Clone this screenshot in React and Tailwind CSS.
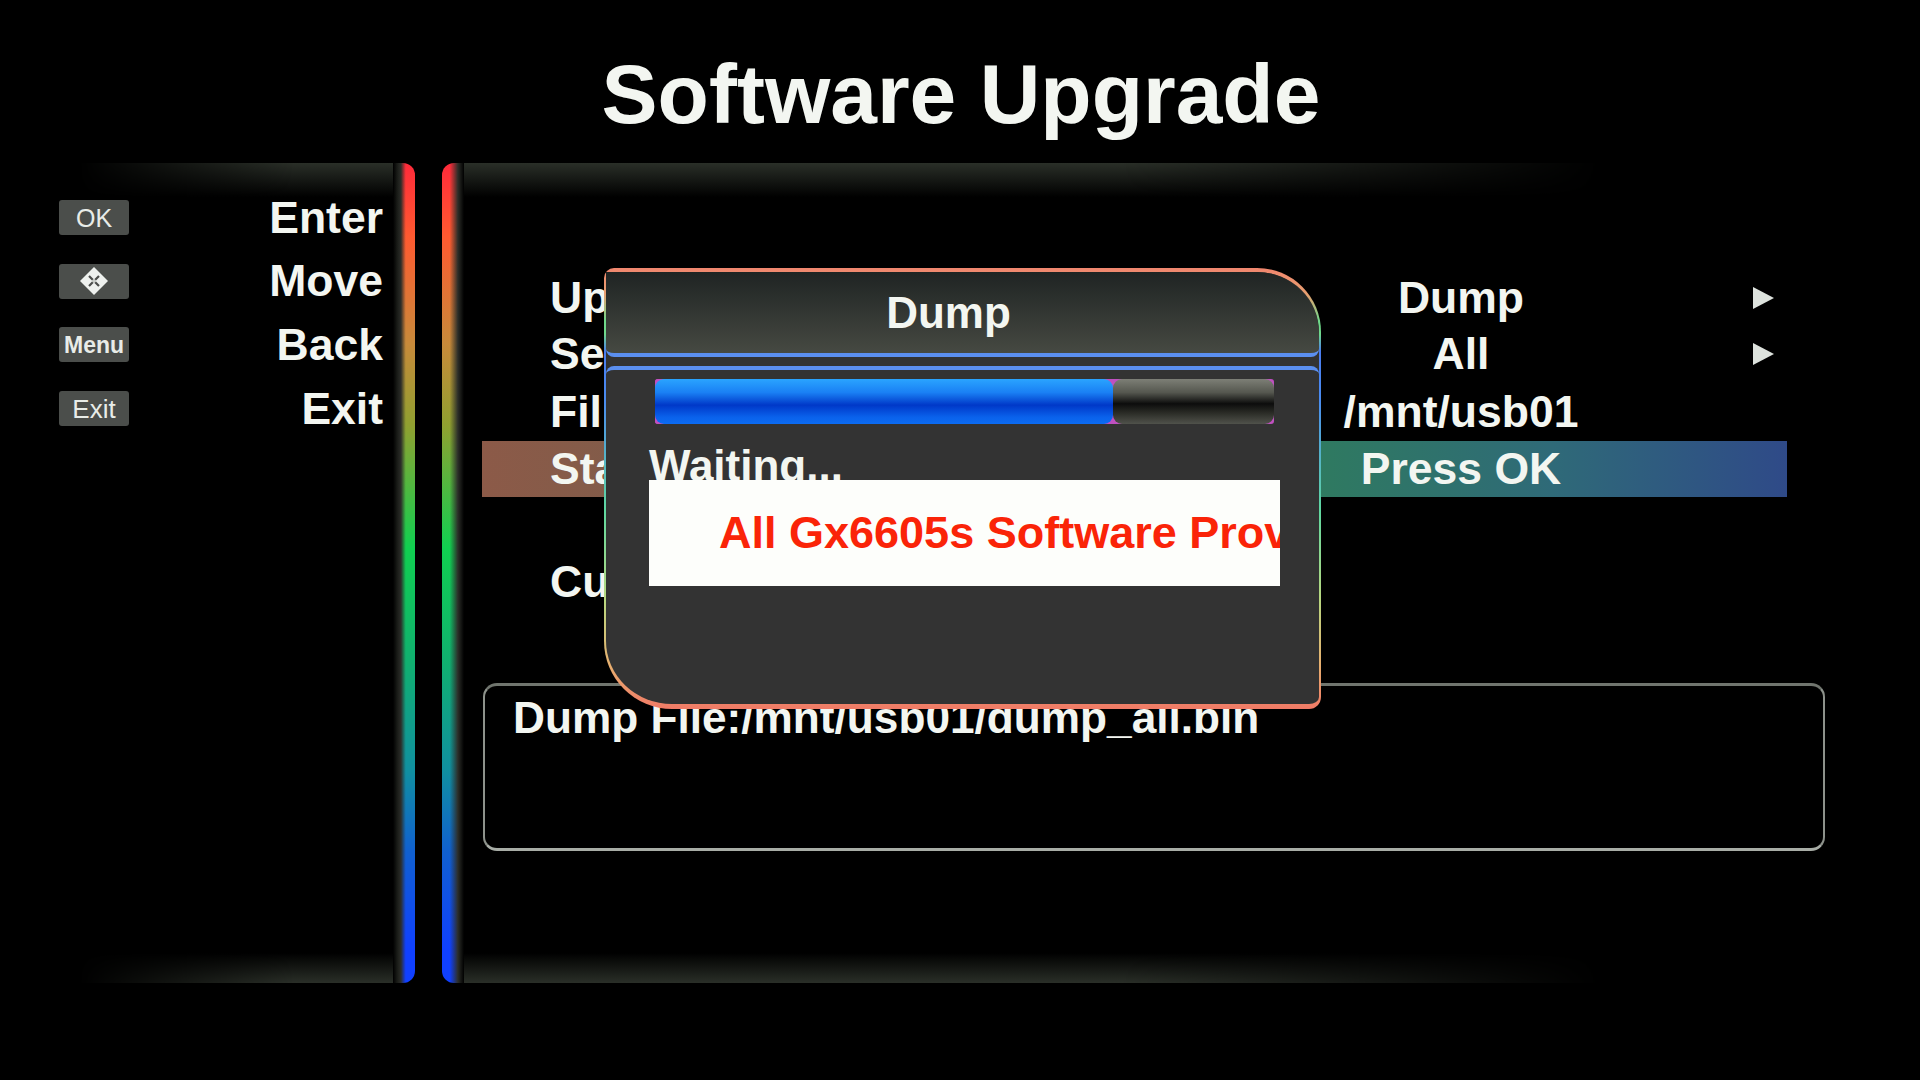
import React from 'react'

const keys = [
  { id: 'ok', cap: 'OK', className: 'text-[25px] font-normal', label: 'Enter' },
  { id: 'move', icon: true, label: 'Move' },
  { id: 'menu', cap: 'Menu', className: 'text-[23px] font-bold', label: 'Back' },
  { id: 'exit', cap: 'Exit', className: 'text-[26px] font-normal', label: 'Exit' },
]

const rows = [
  { label: 'Up', value: 'Dump', arrow: true },
  { label: 'Se', value: 'All', arrow: true },
  { label: 'Fil', value: '/mnt/usb01', tall: true },
  { label: 'Sta', value: 'Press OK', active: true },
]

// Four-way arrow glyph on the Move key
const MoveIcon = () => (
  <svg width="28" height="28" viewBox="0 0 28 28">
    <polygon points="14,0 28,14 14,28 0,14" fill="#eef1ee" />
    <path d="M9 9l10 10M19 9L9 19" stroke="#4b4e4b" strokeWidth="2.2" />
    <polygon points="14,11.5 16.5,14 14,16.5 11.5,14" fill="#c9cdc9" />
  </svg>
)

const Arrow = () => (
  <svg width="21" height="22" viewBox="0 0 21 22">
    <polygon points="0,0 21,11 0,22" fill="#dde2dd" />
  </svg>
)

function OptionRow({ label, value, arrow, active, tall }) {
  return (
    <div
      className={`grid grid-cols-[848px_262px_195px] items-center ${tall ? 'h-[59px]' : 'h-[56px]'} ${
        active ? 'bg-[linear-gradient(to_right,#8c5a48_0%,#6f5f4c_30%,#2f7a60_64%,#2f6a78_82%,#2f4a88_100%)]' : ''
      }`}
    >
      <span className="pl-[68px]">{label}</span>
      <span className="whitespace-nowrap text-center">{value}</span>
      <span className="flex pl-[161px]">{arrow && <Arrow />}</span>
    </div>
  )
}

function Dialog() {
  return (
    <div className="absolute left-[162px] top-[105px] h-[441px] w-[717px] rounded-tl-[10px] rounded-tr-[64px] rounded-br-[12px] rounded-bl-[68px] border-x-2 border-t-[4px] border-b-[5px] border-transparent text-[44px] [background:linear-gradient(#333333,#333333)_padding-box,linear-gradient(to_bottom,#f0866e_0%,#e8a070_6%,#6fd88a_12%,#6fd88a_15%,#4a7cf0_19%,#4a8cf0_30%,#5fd8a0_55%,#b8d880_75%,#e8b070_90%,#f07a66_100%)_border-box]">
      <div className="flex h-[85px] items-center justify-center rounded-tr-[62px] rounded-b-[8px] border-b-[4px] border-[#5b8ff0] bg-[linear-gradient(to_bottom,#1f2423,#464942)] pr-[28px]">
        Dump
      </div>
      <div className="mt-[9px] rounded-t-[8px] border-t-[4px] border-[#5b8ff0] px-[43px] pt-[9px]">
        <div className="ml-[6px] flex h-[45px] w-[619px] overflow-hidden rounded-[3px] bg-[#c050c0]">
          <div className="h-full w-[458px] bg-[#c050c0]">
            <div className="h-full rounded-[9px] bg-[linear-gradient(to_bottom,#2aa4ff_0%,#1a80f4_30%,#0038c8_58%,#0a62ec_85%,#0c6cf2_100%)]" />
          </div>
          <div className="h-full flex-1 rounded-[9px] bg-[linear-gradient(to_bottom,#7d7f76_0%,#55574f_30%,#0c0c0c_55%,#2a2b26_75%,#50524b_100%)]" />
        </div>
        <div className="mt-[20px] leading-[44px]">Waiting...</div>
        <div className="relative -mt-[8px] flex h-[106px] w-[631px] items-center overflow-hidden whitespace-nowrap bg-[#fdfefb] pl-[70px] text-[45px] text-[#fa2408]">
          All Gx6605s Software Prov
        </div>
      </div>
    </div>
  )
}

export default function App() {
  return (
    <div className="flex h-[1080px] w-[1920px] flex-col overflow-hidden bg-black font-['Liberation_Sans',Arial,sans-serif] text-[44.5px] font-bold leading-[44px] text-[#f3f6f1]">
      <header className="flex h-[163px] justify-center pl-[2px] pt-[52px] text-[84px] leading-[84px]">
        Software Upgrade
      </header>

      <div className="flex h-[820px] gap-[27px]">
        <aside className="flex w-[415px]">
          <div className="flex flex-1 flex-col">
            <div className="h-[34px] bg-[linear-gradient(to_bottom,#2a2f28,#000000)] [mask-image:linear-gradient(to_right,transparent_20%,black_75%)]" />
            <div className="flex flex-1 flex-col gap-[28.7px] pl-[59px] pr-[10px] pt-[3px]">
              {keys.map(k => (
                <div key={k.id} className="flex h-[35px] items-center justify-between">
                  <span className={`flex h-[35px] w-[70px] items-center justify-center rounded-[3px] bg-[#4b4e4b] text-[#e8ece8] ${k.className ?? ''}`}>
                    {k.icon ? <MoveIcon /> : k.cap}
                  </span>
                  <span>{k.label}</span>
                </div>
              ))}
            </div>
            <div className="h-[30px] bg-[linear-gradient(to_top,#2a2f28,#000000)] [mask-image:linear-gradient(to_right,transparent_20%,black_75%)]" />
          </div>
          <div className="w-[22px] rounded-r-[12px] bg-[linear-gradient(to_right,#000000,#1a1c18_20%,#2c2d29_36%,transparent_58%),linear-gradient(to_bottom,#ff2a3a_0%,#ff5a30_9%,#c88a3a_22%,#90a030_32%,#10d050_47%,#10b070_61%,#1090a0_74%,#1060d0_84%,#1040ff_96%,#1040ff_100%)]" />
        </aside>

        <main className="relative flex flex-1">
          <div className="w-[22px] rounded-l-[12px] bg-[linear-gradient(to_right,transparent_35%,#2c2e29_72%,#000000),linear-gradient(to_bottom,#ff2a3a_0%,#ff5a30_9%,#c88a3a_22%,#90a030_32%,#10d050_47%,#10b070_61%,#1090a0_74%,#1060d0_84%,#1040ff_96%,#1040ff_100%)]" />
          <div className="flex flex-1 flex-col">
            <div className="h-[34px] bg-[linear-gradient(to_bottom,#2a2f28,#000000)] [mask-image:linear-gradient(to_right,black_45%,transparent_78%)]" />
            <div className="flex-1 pl-[18px] pt-[73px]">
              <div className="w-[1305px]">
                {rows.map(r => (
                  <OptionRow key={r.label} {...r} />
                ))}
                <div className="mt-[57px] flex h-[56px] items-center pl-[68px]">Cu</div>
              </div>
              <div className="ml-[1px] mt-[73px] h-[168px] w-[1342px] rounded-[14px] border-2 border-t-[3px] border-b-[3px] border-x-[#8d928b] border-t-[#70756e] border-b-[#a8ada6] pl-[28px] pt-[10px] text-[44.2px]">
                Dump File:/mnt/usb01/dump_all.bin
              </div>
            </div>
            <div className="h-[30px] bg-[linear-gradient(to_top,#2a2f28,#000000)] [mask-image:linear-gradient(to_right,black_45%,transparent_78%)]" />
          </div>
          <Dialog />
        </main>
      </div>
    </div>
  )
}
